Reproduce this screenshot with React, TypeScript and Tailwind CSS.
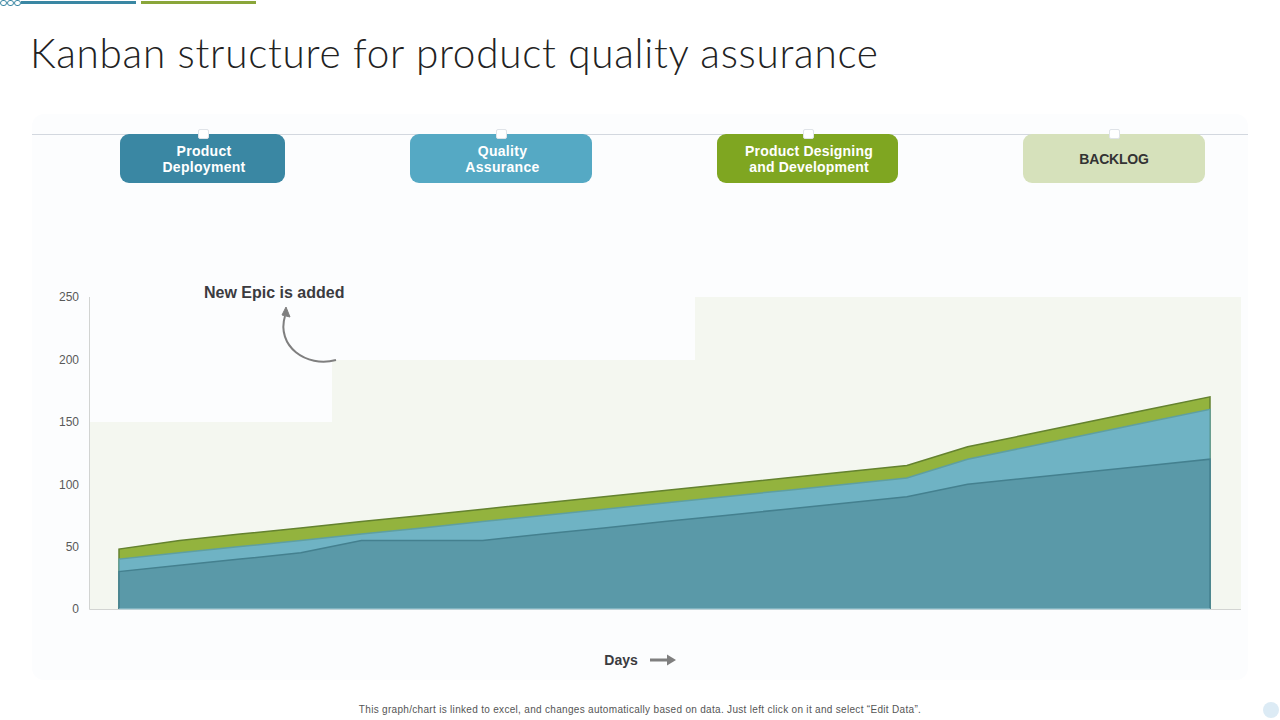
const X = (i: number) => 119 + (1091 / 18) * i;
const Y = (v: number) => 609 - v * 1.248;

const dark = [30, 35, 40, 45, 55, 55, 55, 60, 65, 70, 75, 80, 85, 90, 100, 105, 110, 115, 120];
const mid = [40, 45, 50, 55, 60, 65, 70, 75, 80, 85, 90, 95, 100, 105, 120, 130, 140, 150, 160];
const green = [48, 55, 60, 65, 70, 75, 80, 85, 90, 95, 100, 105, 110, 115, 130, 140, 150, 160, 170];

const line = (vals: number[]) => vals.map((v, i) => `${X(i).toFixed(1)},${Y(v).toFixed(1)}`).join(" ");
const outline = (vals: number[]) => `119,609 ${line(vals)} 1210,609`;

const series = [
  { vals: green, fill: "#93b33e", stroke: "#64822f" },
  { vals: mid, fill: "#6fb3c4", stroke: "#5f9fa0" },
  { vals: dark, fill: "#5a99a8", stroke: "#44808f" },
];

const ticks = [0, 50, 100, 150, 200, 250];

const badges = [
  { label: ["Product", "Deployment"], box: "w-[165px] ml-[88px] pl-[3px] tracking-[0.3px] bg-[#3a87a3] text-white", pin: "left-[78px]" },
  { label: ["Quality", "Assurance"], box: "w-[182px] ml-[125px] pl-[3px] tracking-[0.3px] bg-[#55a9c4] text-white", pin: "left-[86px]" },
  { label: ["Product Designing", "and Development"], box: "w-[181px] ml-[125px] pl-[3px] tracking-[0.2px] bg-[#7fa621] text-white", pin: "left-[86px]" },
  { label: ["BACKLOG"], box: "w-[182px] ml-[125px] tracking-[-0.2px] bg-[#d6e1bb] text-[#333333]", pin: "left-[86px]" },
];

export default function App() {
  return (
    <div className="relative w-[1280px] h-[720px] overflow-hidden bg-white font-['Liberation_Sans',sans-serif]">
      <div className="flex items-center h-[6px]">
        <span className="w-[7px] h-[6px] rounded-full border border-[#3a87a3] bg-white" />
        <span className="w-[7px] h-[6px] rounded-full border border-[#3a87a3] bg-white" />
        <span className="w-[7px] h-[6px] rounded-full border border-[#3a87a3] bg-white" />
        <div className="w-[115px] h-[3px] -mt-[1px] bg-[#3a87a3]" />
        <div className="w-[115px] h-[3px] -mt-[1px] ml-[5px] bg-[#8aa63a]" />
      </div>

      <h1 className="ml-[30px] mt-[23px] h-[85px] text-[40.5px] leading-[48px] font-light tracking-[0.72px] text-[#222222] font-['Lato',sans-serif] whitespace-nowrap">
        Kanban structure for product quality assurance
      </h1>

      <div className="mx-[32px] h-[566px] rounded-xl bg-[#fcfdfe] pt-[20px]">
        <div className="flex h-[49px] border-t border-[#d3d8df]">
          {badges.map((b) => (
            <div
              key={b.label[0]}
              className={`relative flex flex-col items-center justify-center -mt-px rounded-[9px] text-[14px] leading-[16px] font-bold ${b.box}`}
            >
              {b.label.map((t) => (
                <span key={t}>{t}</span>
              ))}
              <span className={`absolute -top-[5px] w-[11px] h-[10px] rounded-[2px] border border-[#dfe3e8] bg-white ${b.pin}`} />
            </div>
          ))}
        </div>

        <svg className="block mt-[97px]" width="1216" height="350" viewBox="32 280 1216 350">
          <path d="M89 422H332V360H695V297H1241V609H89Z" fill="#f4f7f0" />
          <path d="M89.5 297V609.5H1241" fill="none" stroke="#d2d4d2" strokeWidth="1" />
          {series.map((s) => (
            <g key={s.fill}>
              <polygon points={outline(s.vals)} fill={s.fill} />
              <polyline points={outline(s.vals)} fill="none" stroke={s.stroke} strokeWidth="1.5" />
            </g>
          ))}
          <path d="M119 609H1210" stroke="#a9cfdb" strokeWidth="1" />
          {ticks.map((t) => (
            <text key={t} x="79" y={Y(t) + 4.4} textAnchor="end" fontSize="12" fill="#595959">
              {t}
            </text>
          ))}
          <text x="204" y="298" fontSize="16" fontWeight="700" fill="#3b3b3f">
            New Epic is added
          </text>
          <path d="M336 360C306 368 276 346 285 316" fill="none" stroke="#7f7f7f" strokeWidth="2" />
          <path d="M286 307L290 317L282 315Z" fill="#7f7f7f" stroke="#7f7f7f" strokeWidth="1" />
        </svg>

        <div className="flex items-center justify-center gap-[12px] mt-[22px] h-[16px] text-[14px] font-bold text-[#3b3b3f]">
          <span>Days</span>
          <svg width="26" height="12" viewBox="0 0 26 12">
            <path d="M0 6H19" stroke="#7f7f7f" strokeWidth="3" />
            <path d="M17 0.5L26 6L17 11.5Z" fill="#7f7f7f" />
          </svg>
        </div>
      </div>

      <p className="mt-[24px] text-center text-[10px] leading-[12px] tracking-[0.31px] text-[#555555]">
        This graph/chart is linked to excel, and changes automatically based on data. Just left click on it and select “Edit Data”.
      </p>

      <div className="absolute left-[1263px] top-[702px] w-[16px] h-[16px] rounded-full bg-[#dcebf5]" />
    </div>
  );
}
